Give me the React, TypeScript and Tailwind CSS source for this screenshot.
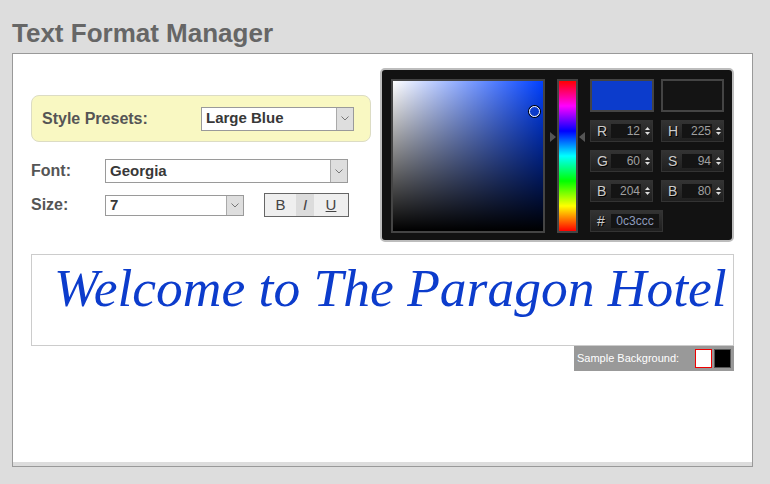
import React from "react"

const Chevron = () => (
  <svg width="8" height="5" viewBox="0 0 8 5" fill="none">
    <path d="M0.5 0.5 L4 4 L7.5 0.5" stroke="#777" strokeWidth="1" />
  </svg>
)

const Spinner = () => (
  <svg width="5" height="8" viewBox="0 0 5 8">
    <path d="M2.5 0 L5 3 L0 3 Z" fill="#ddd" />
    <path d="M2.5 8 L5 5 L0 5 Z" fill="#ddd" />
  </svg>
)

const FakeSelect: React.FC<{ value: string; className?: string }> = ({ value, className = "" }) => (
  <div className={`flex flex-none items-stretch border border-[#9a9a9a] bg-white ${className}`}>
    <div className="flex flex-1 items-center pl-[4px] text-[15px] font-bold text-[#383838]">{value}</div>
    <div className="flex w-[17px] items-center justify-center border-l border-[#aaa] bg-[#dedede]">
      <Chevron />
    </div>
  </div>
)

const Field: React.FC<{ label: string; value: string; hex?: boolean }> = ({ label, value, hex }) => (
  <div
    className={`flex h-[22px] items-center border border-[#333] bg-linear-to-b from-[#333] to-[#1f1f1f] ${
      hex ? "w-[73px]" : "w-[63px]"
    }`}
  >
    <span className="w-[20px] pl-[6px] text-[14px] leading-none text-[#ccc] [text-shadow:1px_1px_0_#000]">{label}</span>
    {hex ? (
      <span className="h-[14px] w-[48px] bg-[#141414] text-center text-[12px] leading-[14px] text-[#8e9bbd]">{value}</span>
    ) : (
      <>
        <span className="h-[14px] w-[30px] bg-[#141414] pr-[1px] text-right text-[12px] leading-[14px] text-[#a0a0a0]">
          {value}
        </span>
        <span className="ml-[4px] flex items-center">
          <Spinner />
        </span>
      </>
    )}
  </div>
)

const ColorPicker = () => (
  <div className="flex h-[174px] w-[354px] flex-none gap-[12px] rounded-[5px] border-2 border-[#bdbdbd] bg-[#121212] p-[9px]">
    <div className="relative h-[154px] w-[154px] flex-none border-2 border-[#444] bg-[#0040ff]">
      <div className="h-full w-full bg-linear-to-r from-white to-transparent">
        <div className="h-full w-full bg-linear-to-b from-transparent to-black" />
      </div>
      <div className="absolute left-[136px] top-[25px] h-[11px] w-[11px] rounded-full border border-white shadow-[0_0_0_1px_#000]" />
    </div>
    <div className="relative h-[154px] w-[21px] flex-none border-2 border-[#444] bg-[linear-gradient(to_bottom,#f00,#f0f,#00f,#0ff,#0f0,#ff0,#f00)]">
      <svg className="absolute left-[-9px] top-[51px]" width="6" height="10" viewBox="0 0 6 10">
        <path d="M0 0 L6 5 L0 10 Z" fill="#555" />
      </svg>
      <svg className="absolute right-[-9px] top-[51px]" width="6" height="10" viewBox="0 0 6 10">
        <path d="M6 0 L0 5 L6 10 Z" fill="#555" />
      </svg>
    </div>
    <div className="flex flex-col">
      <div className="flex gap-[7px]">
        <div className="h-[33px] w-[64px] border-2 border-[#444] bg-[#0c3ccc]" />
        <div className="h-[33px] w-[63px] border-2 border-[#444] bg-[#141414]" />
      </div>
      <div className="mt-[8px] grid grid-cols-[63px_63px] gap-x-[8px] gap-y-[8px]">
        <Field label="R" value="12" />
        <Field label="H" value="225" />
        <Field label="G" value="60" />
        <Field label="S" value="94" />
        <Field label="B" value="204" />
        <Field label="B" value="80" />
        <Field label="#" value="0c3ccc" hex />
      </div>
    </div>
  </div>
)

export default function App() {
  return (
    <div className="min-h-screen bg-[#dddddd] font-['Liberation_Sans',Arial,sans-serif]">
      <h1 className="pl-[12px] pt-[18px] text-[26px] font-bold leading-[30px] text-[#666]">Text Format Manager</h1>
      <div className="ml-[12px] mt-[5px] h-[414px] w-[741px] border border-[#999] bg-white px-[18px] pt-[14px] shadow-[inset_0_-4px_0_#dcdcdc]">
        <div className="flex gap-[9px]">
          <div className="w-[340px] flex-none pt-[27px]">
            <div className="flex h-[47px] items-center rounded-[8px] border border-[#dcdcc4] bg-[#f9f8c2] pl-[10px]">
              <span className="w-[159px] text-[16px] font-bold text-[#555]">Style Presets:</span>
              <FakeSelect value="Large Blue" className="h-[24px] w-[153px]" />
            </div>
            <div className="mt-[17px] flex items-center">
              <span className="w-[74px] text-[16px] font-bold text-[#555]">Font:</span>
              <FakeSelect value="Georgia" className="h-[24px] w-[243px]" />
            </div>
            <div className="mt-[10px] flex items-center">
              <span className="w-[74px] text-[16px] font-bold text-[#555]">Size:</span>
              <FakeSelect value="7" className="h-[21px] w-[139px]" />
              <div className="ml-[20px] flex h-[24px] w-[85px] border border-[#666] bg-[#efefef] text-[15px] text-[#444]">
                <span className="flex w-[31px] items-center justify-center">B</span>
                <span className="flex w-[18px] items-center justify-center bg-[#dcdcdc] italic">I</span>
                <span className="flex w-[34px] items-center justify-center underline">U</span>
              </div>
            </div>
          </div>
          <ColorPicker />
        </div>
        <div className="mt-[12px] flex flex-col">
          <div className="h-[92px] border border-[#ccc] pl-[22px] pt-[3px] font-['Liberation_Serif','Times_New_Roman',serif] text-[53.5px] italic leading-[60px] text-[#0c3ccc]">
            Welcome to The Paragon Hotel
          </div>
          <div className="flex h-[25px] w-[160px] items-center self-end bg-[#999] pl-[3px] pr-[3px]">
            <span className="text-[11px] text-white">Sample Background:</span>
            <div className="ml-auto h-[19px] w-[17px] border border-[#e00] bg-white" />
            <div className="ml-[2px] h-[19px] w-[17px] border border-[#555] bg-black" />
          </div>
        </div>
      </div>
    </div>
  )
}
